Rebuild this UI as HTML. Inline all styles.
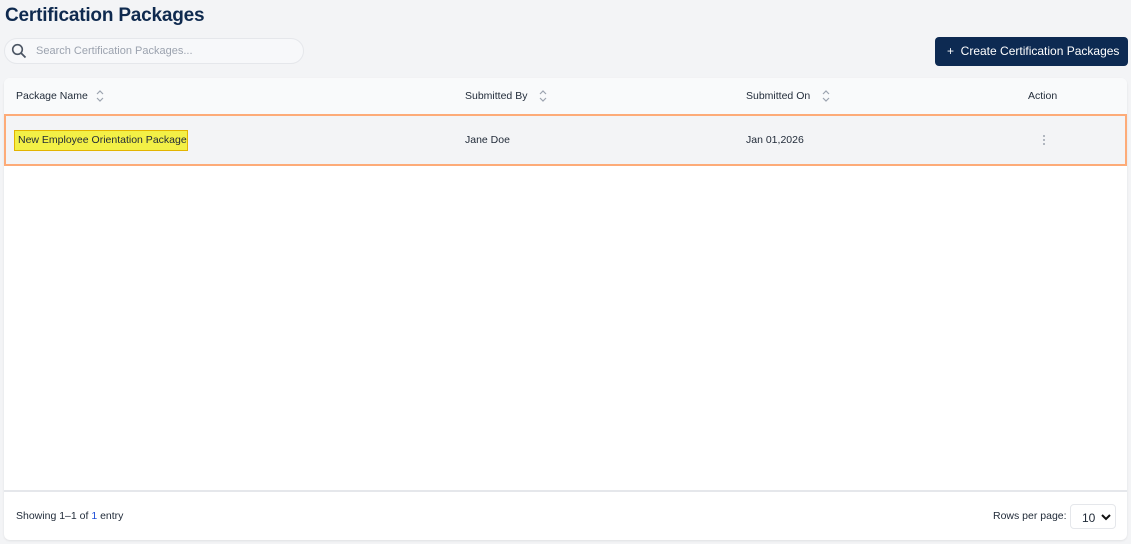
<!DOCTYPE html>
<html><head><style>
*{box-sizing:border-box;margin:0;padding:0}
body{width:1131px;height:544px;background:#f3f4f6;font-family:"Liberation Sans",sans-serif;position:relative;overflow:hidden;color:#1f2937}
h1{position:absolute;left:5px;top:5px;font-size:19px;font-weight:bold;color:#0f2a4f;letter-spacing:-0.2px}
.search{position:absolute;left:4px;top:38px;width:300px;height:26px;border:1px solid #e5e7eb;border-radius:13px;background:#f7f8fa}
.search span{position:absolute;left:31px;top:6px;font-size:11px;color:#9ca3af}
.btn{position:absolute;left:935px;top:37px;width:193px;height:29px;background:#0d2a52;border-radius:4px;color:#fff;font-size:12px;line-height:29px;padding-left:12px;white-space:nowrap;overflow:hidden}
.card{position:absolute;left:4px;top:78px;width:1123px;height:462px;background:#fff;border-radius:6px;box-shadow:0 1px 2px rgba(0,0,0,.08)}
.head{position:absolute;left:0;top:0;width:100%;height:36px;background:#f9fafb;border-radius:6px 6px 0 0;font-size:10.5px;color:#1f2937}
.head span,.row span{position:absolute;white-space:nowrap}
.row{position:absolute;left:0;top:36px;width:100%;height:52px;background:#f3f4f6;border:2px solid #fdab78;font-size:10.5px}
.hl{left:8px;top:14px;width:174px;height:21px;line-height:19px;background:#f3f046;border:1px solid #e3b400;padding:0 3px;color:#1f2937;font-size:10.5px}
.foot{position:absolute;left:0;top:412px;width:100%;border-top:2px solid #e5e7eb;height:50px;font-size:10.5px}
.sel{position:absolute;left:1066px;top:12px;width:46px;height:25px;border:1px solid #e5e7eb;border-radius:4px;background:#fff;font-size:12px;padding:6px 0 0 11px}
svg.s{position:absolute}
</style></head><body>
<h1>Certification Packages</h1>
<div class="search"><svg class="s" style="left:6px;top:4px" width="16" height="16" viewBox="0 0 16 16"><circle cx="6.5" cy="6.5" r="4.8" fill="none" stroke="#4b5563" stroke-width="1.6"/><path d="M10 10l4.5 4.5" stroke="#4b5563" stroke-width="1.8"/></svg><span>Search Certification Packages...</span></div>
<div class="btn">+&nbsp;&nbsp;Create Certification Packages</div>
<div class="card">
<div class="head">
<span style="left:12px;top:12px">Package Name</span>
<svg class="s" style="left:91px;top:10px" width="10" height="16" viewBox="0 0 10 16"><path d="M2 6l3-3 3 3M2 10l3 3 3-3" fill="none" stroke="#9ca3af" stroke-width="1.2"/></svg>
<span style="left:461px;top:12px">Submitted By</span>
<svg class="s" style="left:534px;top:10px" width="10" height="16" viewBox="0 0 10 16"><path d="M2 6l3-3 3 3M2 10l3 3 3-3" fill="none" stroke="#9ca3af" stroke-width="1.2"/></svg>
<span style="left:742px;top:12px">Submitted On</span>
<svg class="s" style="left:817px;top:10px" width="10" height="16" viewBox="0 0 10 16"><path d="M2 6l3-3 3 3M2 10l3 3 3-3" fill="none" stroke="#9ca3af" stroke-width="1.2"/></svg>
<span style="left:1024px;top:12px">Action</span>
</div>
<div class="row">
<span class="hl">New Employee Orientation Package</span>
<span style="left:459px;top:18px">Jane Doe</span>
<span style="left:740px;top:18px">Jan 01,2026</span>
<svg class="s" style="left:1036px;top:18px" width="4" height="12" viewBox="0 0 4 12"><circle cx="2" cy="2" r="1" fill="#9ca3af"/><circle cx="2" cy="6" r="1" fill="#9ca3af"/><circle cx="2" cy="10" r="1" fill="#9ca3af"/></svg>
</div>
<div class="foot">
<span style="position:absolute;left:12px;top:18px">Showing 1–1 of <span style="color:#1d4ed8">1</span> entry</span>
<span style="position:absolute;left:989px;top:18px">Rows per page:</span>
<div class="sel">10<svg style="position:absolute;left:30px;top:9px" width="10" height="7" viewBox="0 0 10 7"><path d="M1 1l4 4 4-4" fill="none" stroke="#111" stroke-width="2"/></svg></div>
</div>
</div>
</body></html>
